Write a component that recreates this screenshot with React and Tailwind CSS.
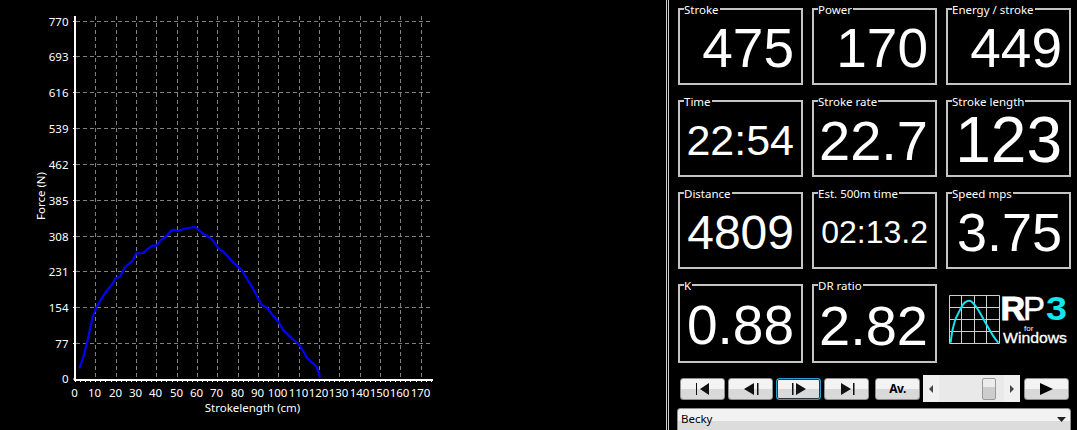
const yLabels = [770, 693, 616, 539, 462, 385, 308, 231, 154, 77, 0];
const yPos = [21.5, 56.5, 92.5, 128.5, 164.5, 200.5, 236.5, 271.5, 307.5, 343.5, 379];
const xLabels = [0, 10, 20, 30, 40, 50, 60, 70, 80, 90, 100, 110, 120, 130, 140, 150, 160, 170];

const curve =
  "79.3,368.3 84,355 88.3,336.7 92.7,316.7 96.7,306.7 101.7,298.3 106.7,291 111.7,285 115.7,278.3 120,276.7 124.3,268.3 128.3,264.3 132.7,260.7 136.3,253.3 143.3,253 148.3,248.3 152.7,245.7 156.7,245.7 160.7,240 165.7,237 170.7,231 174,229.7 178.3,231 183.3,229 188.3,228 195,227 200,231 204,234.3 210,237.7 213.3,241 218.3,248.3 223.3,251.7 228.3,256.7 233.3,262.7 241.7,270 248.3,281 253.3,289 258.3,299 261.7,305 266.7,307.3 271.7,314 278.3,321.7 283.3,330 290,336.7 298.3,344 304,352.3 306.7,357.7 316.7,366.7 320,377.7";

const xAt = (v) => Math.round(75 + v * 2.033) + 0.5;

function ForceChart() {
  const minorX = [];
  for (let v = 0; v <= 175; v += 2.5) minorX.push(xAt(v));

  return (
    <svg width="666" height="430" className="block">
      <g stroke="#808080" strokeDasharray="4 3">
        {yPos.slice(0, 10).map((y) => (
          <line key={y} x1="76" x2="433" y1={y} y2={y} />
        ))}
        {xLabels.slice(1).map((v) => (
          <line key={v} x1={xAt(v)} x2={xAt(v)} y1="16" y2="378" />
        ))}
      </g>
      <g stroke="#fff">
        {yPos.map((y) => (
          <line key={y} x1="73" x2="75" y1={y} y2={y} />
        ))}
        {yPos.slice(0, 10).map((y) => (
          <line key={y} x1="74" x2="75" y1={y + 18} y2={y + 18} />
        ))}
        {minorX.map((x) => (
          <line key={x} x1={x} x2={x} y1="380" y2="382" />
        ))}
      </g>
      <path d="M75 16V380H433" fill="none" stroke="#fff" strokeWidth="2" />
      <polyline points={curve} fill="none" stroke="#0000ff" strokeWidth="2.2" />
      <g fill="#fff" fontSize="11.5" fontFamily="'Noto Sans', sans-serif">
        {yLabels.map((l, i) => (
          <text key={l} x="68.5" y={yPos[i] + 4} textAnchor="end">
            {l}
          </text>
        ))}
        {xLabels.map((l) => (
          <text key={l} x={xAt(l) - 1} y="397" textAnchor="middle">
            {l}
          </text>
        ))}
        <text x="252.5" y="412" textAnchor="middle">
          Strokelength (cm)
        </text>
        <text transform="translate(45 196) rotate(-90)" textAnchor="middle">
          Force (N)
        </text>
      </g>
    </svg>
  );
}

function Stat({ label, value, size }) {
  return (
    <div className="relative flex items-center justify-end border-2 border-[#c4c4c4] pt-1 pr-[7px]">
      <span className="absolute left-[4px] top-[-8px] bg-black pr-px font-['Noto_Sans',sans-serif] text-[11.5px] leading-[15px] text-white">
        {label}
      </span>
      <span className={`font-['Liberation_Sans',sans-serif] leading-[0.7] text-white ${size}`}>
        {value}
      </span>
    </div>
  );
}

function Logo() {
  const cols = [3.5, 15.5, 28.5, 40.5, 53.5];
  const rows = [11.5, 23.5, 35.5, 47.5, 59.5];
  return (
    <svg width="125" height="79" className="block">
      <g stroke="#cfcfcf">
        {cols.map((x) => (
          <line key={x} x1={x} x2={x} y1={rows[0]} y2={rows[4]} />
        ))}
        {rows.map((y) => (
          <line key={y} x1={cols[0]} x2={cols[4]} y1={y} y2={y} />
        ))}
      </g>
      <path
        d="M4.700 58.700C5.500 51 6 47 7.300 42.700C8.500 37 10 33 12.300 29.300C14.500 25 16.500 20 19 18.300C21 17 24 16.500 25.700 17.700C28 19.500 30 22.500 32.300 26C35 30.500 38 36 40.700 41C44 47 48 54 52.300 58.700"
        fill="none"
        stroke="#12e6f0"
        strokeWidth="2"
      />
      <g fontFamily="'Liberation Sans', sans-serif">
        <text x="54.500" y="36" fontSize="34" fontWeight="700" stroke="#fff" strokeWidth="1" fill="#fff">
          R
        </text>
        <text x="77" y="36" fontSize="33" stroke="#fff" strokeWidth="0.5" fill="#fff">
          P
        </text>
        <text x="100" y="36" fontSize="33" fontWeight="700" fill="#12e6f0" textLength="21" lengthAdjust="spacingAndGlyphs">
          3
        </text>
        <text x="78" y="46.500" fontSize="8" fill="#fff">
          for
        </text>
        <text x="57" y="59" fontSize="15" stroke="#fff" strokeWidth="0.3" fill="#fff" textLength="64" lengthAdjust="spacingAndGlyphs">
          Windows
        </text>
      </g>
    </svg>
  );
}

function NavButton({ focused, children }) {
  return (
    <button
      className={`flex h-[22px] w-[45px] items-center justify-center rounded-[3px] border bg-gradient-to-b from-[#f3f3f3] from-50% to-[#d9d9d9] to-50% ${
        focused ? "border-[#2b9bd3] shadow-[inset_0_0_0_1px_#333]" : "border-[#8e8e8e]"
      }`}
    >
      {children}
    </button>
  );
}

const Glyph = ({ d }) => (
  <svg width="18" height="14" viewBox="0 0 18 14" className="block">
    <path d={d} fill="#111" />
  </svg>
);

function Controls() {
  return (
    <div className="ml-[2px] mt-[12px] flex h-[27px] items-center">
      <div className="flex gap-[3px]">
        <NavButton>
          <Glyph d="M2 1h1v12H2zM15 1v12L6 7z" />
        </NavButton>
        <NavButton>
          <Glyph d="M12 1v12L2 7zM15 1h1.500v12H15z" />
        </NavButton>
        <NavButton focused>
          <Glyph d="M2 1h1.500v12H2zM6 1l10 6-10 6z" />
        </NavButton>
        <NavButton>
          <Glyph d="M3 1l10 6-10 6zM15 1h1.500v12H15z" />
        </NavButton>
      </div>
      <button className="ml-[6px] h-[22px] w-[45px] rounded-[3px] border border-[#8e8e8e] bg-gradient-to-b from-[#f3f3f3] from-50% to-[#d9d9d9] to-50% font-['Noto_Sans',sans-serif] text-[12px] font-bold leading-none tracking-[-0.5px] text-black">
        Av.
      </button>
      <div className="ml-[3px] flex h-[27px] w-[97px] items-center bg-[#f0f0f0]">
        <div className="flex w-[16px] justify-center">
          <svg width="5" height="8" className="block">
            <path d="M4 0v8L0 4z" fill="#444" />
          </svg>
        </div>
        <div className="flex h-full w-[65px] items-center bg-[#e9e9e9] pl-[43px]">
          <div className="h-[22px] w-[14px] rounded-[2px] border border-[#9a9a9a] bg-gradient-to-b from-[#ececec] from-40% to-[#cdcdcd] to-40%" />
        </div>
        <div className="flex w-[16px] justify-center">
          <svg width="5" height="8" className="block">
            <path d="M0 0v8l4-4z" fill="#444" />
          </svg>
        </div>
      </div>
      <div className="ml-[4px]">
        <NavButton>
          <svg width="13" height="12" className="block">
            <path d="M0 0l13 6-13 6z" fill="#000" />
          </svg>
        </NavButton>
      </div>
    </div>
  );
}

export default function App() {
  return (
    <div className="flex h-[430px] w-[1077px] overflow-hidden bg-black">
      <div className="w-[666px]">
        <ForceChart />
      </div>
      <div className="h-full flex-1 border-l-[3px] border-double border-[#cfcfcf] pl-[9px] pt-2">
        <div className="grid grid-cols-[125px_125px_125px] grid-rows-[77px_77px_77px_79px] gap-x-[9px] gap-y-[15px]">
          <Stat label="Stroke" value="475" size="text-[55px]" />
          <Stat label="Power" value="170" size="text-[55px]" />
          <Stat label="Energy / stroke" value="449" size="text-[55px]" />
          <Stat label="Time" value="22:54" size="text-[43px]" />
          <Stat label="Stroke rate" value="22.7" size="text-[56px]" />
          <Stat label="Stroke length" value="123" size="text-[64px]" />
          <Stat label="Distance" value="4809" size="text-[48px]" />
          <Stat label="Est. 500m time" value="02:13.2" size="text-[32px]" />
          <Stat label="Speed mps" value="3.75" size="text-[54px]" />
          <Stat label="K" value="0.88" size="text-[55px]" />
          <Stat label="DR ratio" value="2.82" size="text-[56px]" />
          <Logo />
        </div>
        <Controls />
        <div className="ml-[-1px] mt-[6px] flex h-[26px] w-[394px] items-center justify-between rounded-[3px] border border-[#8e8e8e] bg-gradient-to-b from-[#f2f2f2] from-50% to-[#dcdcdc] to-50% pb-[4px] pl-[3px] pr-[4px]">
          <span className="font-['Noto_Sans',sans-serif] text-[11.5px] leading-none text-black">Becky</span>
          <svg width="9" height="5" className="block">
            <path d="M0 0h9L4.500 5z" fill="#222" />
          </svg>
        </div>
      </div>
    </div>
  );
}
